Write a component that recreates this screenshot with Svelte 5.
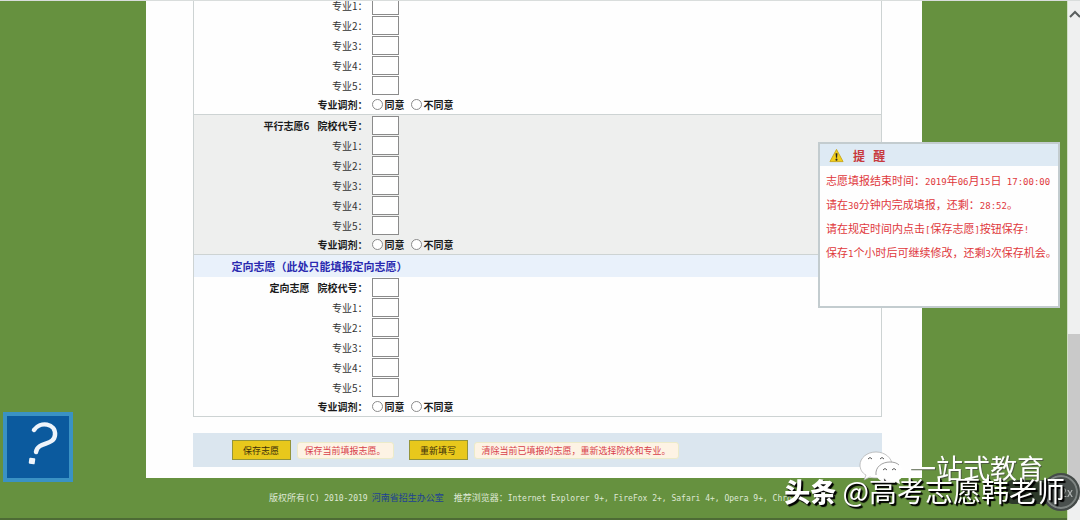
<script lang="ts">
  interface Group {
    id: string;
    title: string;
    shaded: boolean;
    continued: boolean;
  }

  const parallel: Group[] = [
    { id: 'p5', title: '平行志愿5', shaded: false, continued: true },
    { id: 'p6', title: '平行志愿6', shaded: true, continued: false }
  ];
  const directed: Group[] = [
    { id: 'd1', title: '定向志愿', shaded: false, continued: false }
  ];
  const majors = [1, 2, 3, 4, 5];
</script>

{#snippet volunteer(group: Group)}
  <div class="group" class:shaded={group.shaded} class:continued={group.continued}>
    {#if !group.continued}
      <div class="row">
        <label class="label strong" for="{group.id}-school">
          <span class="group-title">{group.title}</span>院校代号：
        </label>
        <input class="code" id="{group.id}-school" type="text" />
      </div>
    {/if}
    {#each majors as n}
      <div class="row">
        <label class="label" for="{group.id}-major-{n}">专业{n}：</label>
        <input class="code" id="{group.id}-major-{n}" type="text" />
      </div>
    {/each}
    <div class="row adjust" role="radiogroup" aria-labelledby="{group.id}-adjust">
      <span class="label strong" id="{group.id}-adjust">专业调剂：</span>
      <label class="choice"><input type="radio" name="{group.id}-adjust" />同意</label>
      <label class="choice"><input type="radio" name="{group.id}-adjust" />不同意</label>
    </div>
  </div>
{/snippet}

<div class="window">
  <div class="page">
    <main class="content">
      <form class="sheet">
        {#each parallel as group}
          {@render volunteer(group)}
        {/each}
        <h2 class="section-title">定向志愿（此处只能填报定向志愿）</h2>
        {#each directed as group}
          {@render volunteer(group)}
        {/each}
      </form>
      <div class="actions">
        <button type="button">保存志愿</button>
        <span class="tip">保存当前填报志愿。</span>
        <button type="button">重新填写</button>
        <span class="tip">清除当前已填报的志愿，重新选择院校和专业。</span>
      </div>
    </main>
    <footer>
      <span>版权所有<span class="latin">(C) 2010-2019</span></span>
      <a href="#home">河南省招生办公室</a>
      <span class="browsers">推荐浏览器：<span class="latin">Internet Explorer 9+, FireFox 2+, Safari 4+, Opera 9+, Chro</span></span>
    </footer>
  </div>
  <div class="scrollbar">
    <svg class="arrow" viewBox="0 0 12 10"><path d="M2 8 L7 3 L12 8" /></svg>
    <div class="thumb"></div>
  </div>
</div>

<aside class="notice">
  <h3>
    <svg viewBox="0 0 16 16">
      <path d="M8 1.5 L15 14.5 H1 Z" fill="#f2cf1d" stroke="#c9a81c" stroke-linejoin="round" />
      <path d="M7 5.5 H9 L8.6 10.5 H7.4 Z" fill="#222" />
      <circle cx="8" cy="12.4" r="1.1" fill="#222" />
    </svg>
    提&nbsp;&nbsp;&nbsp;醒
  </h3>
  <p>志愿填报结束时间：<span class="num">2019</span>年<span class="num">06</span>月<span class="num">15</span>日<span class="num">&nbsp;17:00:00</span></p>
  <p>请在<span class="num">30</span>分钟内完成填报，还剩：<span class="num">28:52</span>。</p>
  <p>请在规定时间内点击<span class="num">[</span>保存志愿<span class="num">]</span>按钮保存<span class="num">!</span></p>
  <p>保存<span class="num">1</span>个小时后可继续修改，还剩<span class="num">3</span>次保存机会。</p>
</aside>

<button class="help" type="button" aria-label="帮助">
  <svg viewBox="0 0 62 62">
    <path d="M27 14 C33 5 49 7 48 19 C47 30 31 25 29 36" fill="none" stroke="#eef4fb" stroke-width="4.5" stroke-linecap="round" />
    <rect x="22" y="42" width="6" height="6" rx="1" fill="#eef4fb" transform="rotate(8 25 45)" />
  </svg>
</button>

<div class="speed">
  <span class="speed-pill"></span>
  <span class="speed-dial">2x</span>
</div>

<div class="channel">
  <svg viewBox="0 0 46 34">
    <path d="M17 1 C8 1 1 7 1 14 C1 18 3 22 7 24 L5 29 L11 26 C13 27 15 27 18 27 C27 27 33 21 33 14 C33 7 26 1 17 1 Z" fill="#fff" stroke="#aaa" stroke-width="0.7" />
    <path d="M9 8 q2 -3 4 0 M21 8 q2 -3 4 0" fill="none" stroke="#555" />
    <path d="M31 11 C23 11 17 16 17 22 C17 28 23 32 31 32 C33 32 35 32 36 31 L41 33 L40 29 C43 27 44 25 44 22 C44 16 39 11 31 11 Z" fill="#fff" />
    <path d="M17 24 C16 16 23 11 31 11 C35 11 38 12 40 14" fill="none" stroke="#777" stroke-width="0.7" />
    <path d="M24 19 q2 -3 4 0 M33 19 q2 -3 4 0" fill="none" stroke="#555" />
  </svg>
  一站式教育
</div>
<div class="author"><b>头条</b> @高考志愿韩老师</div>

<style>
  :global(body) {
    overflow: hidden;
    font-family: 'Noto Sans CJK SC', sans-serif;
    font-size: 10px;
    color: #333;
  }

  .window {
    display: flex;
    height: 100vh;
    box-sizing: border-box;
    border-top: 1px solid #d9dddc;
    overflow: hidden;
  }

  .page {
    flex: 1;
    min-width: 0;
    display: flex;
    flex-direction: column;
    background: #66913f;
    border-bottom: 2px solid #4d6b35;
  }

  .content {
    width: 100%;
    max-width: 776px;
    box-sizing: border-box;
    margin: 0 auto;
    padding: 0 40px 11px 47px;
    background: #fefefe;
  }

  .sheet {
    border: 1px solid #cdd3d3;
    border-top: 0;
    overflow: hidden;
  }

  .group.continued {
    margin-top: -6px;
  }

  .group.shaded {
    border-top: 1px solid #cdd3d3;
    background: #eeefee;
  }

  .row {
    display: flex;
    align-items: center;
    height: 20px;
  }

  .label {
    width: 174px;
    margin-right: 4px;
    text-align: right;
    white-space: nowrap;
  }

  .strong,
  .choice {
    font-weight: 700;
    color: #1a1a1a;
  }

  .group-title {
    margin-right: 8px;
  }

  .code {
    width: 27px;
    height: 19px;
    box-sizing: border-box;
    padding: 0 2px;
    border: 1px solid #8b8b8b;
    background: #fff;
    font-size: 10px;
  }

  .adjust {
    height: 19px;
  }

  .choice {
    display: flex;
    align-items: center;
    gap: 2px;
    margin-right: 6px;
  }

  .choice input {
    appearance: none;
    width: 11px;
    height: 11px;
    margin: 0;
    border: 1px solid #8b8b8b;
    border-radius: 50%;
    background: #fff;
  }

  .section-title {
    margin: 0;
    padding-left: 38px;
    border-top: 1px solid #cdd3d3;
    background: #e9f1fb;
    color: #2a2ab0;
    font-size: 11px;
    font-weight: 700;
    line-height: 22px;
  }

  .actions {
    display: flex;
    align-items: center;
    height: 34px;
    margin-top: 16px;
    padding-left: 39px;
    background: #dbe6ef;
    font-size: 9px;
    white-space: nowrap;
  }

  .actions button {
    width: 59px;
    height: 20px;
    padding: 0;
    border: 1px solid #94953a;
    background: #e8c81c;
    color: #3a2f0a;
    font-family: inherit;
    font-size: 9px;
  }

  .tip {
    margin: 0 15px 0 6px;
    padding: 0 7px;
    border: 1px solid #ecebc9;
    border-radius: 3px;
    background: #fdf3e4;
    color: #d8404a;
    line-height: 15px;
  }

  footer {
    display: flex;
    gap: 4px;
    padding: 13px 0 0 269px;
    color: #dfe8d5;
    font-size: 9px;
    line-height: 14px;
    white-space: nowrap;
    overflow: hidden;
  }

  footer a {
    color: #1d3f96;
    text-decoration: none;
  }

  .browsers {
    margin-left: 6px;
  }

  .latin {
    font-family: 'DejaVu Sans Mono', monospace;
    font-size: 8px;
    line-height: 1;
  }

  .scrollbar {
    display: flex;
    flex-direction: column;
    width: 12px;
    background: #eff0f0;
    border-left: 1px solid #d3e0c6;
  }

  .arrow {
    width: 12px;
    height: 10px;
    margin: 8px 0;
    fill: none;
    stroke: #5a5f5f;
    stroke-width: 2;
  }

  .thumb {
    height: 32%;
    margin: auto 0 20px;
    background: #c9c9c9;
  }

  .notice {
    position: fixed;
    top: 142px;
    right: 20px;
    width: 242px;
    height: 166px;
    box-sizing: border-box;
    border: 2px solid #c3cccf;
    background: #fefefe;
    color: #e0383c;
    font-size: 11px;
    white-space: nowrap;
  }

  .notice h3 {
    display: flex;
    align-items: center;
    gap: 9px;
    height: 22px;
    margin: 0 0 2px;
    padding-left: 9px;
    background: #deeaf4;
    color: #c8383c;
    font-size: 12px;
  }

  .notice h3 svg {
    width: 15px;
    height: 15px;
  }

  .notice p {
    margin: 0;
    padding-left: 6px;
    line-height: 24px;
  }

  .num {
    font-family: 'DejaVu Sans Mono', monospace;
    font-size: 9px;
    line-height: 1;
  }

  .help {
    position: fixed;
    left: 3px;
    bottom: 38px;
    width: 70px;
    height: 70px;
    padding: 0;
    border: 4px solid #3a92c4;
    background: #0b5a9e;
  }

  .help svg {
    display: block;
    width: 62px;
    height: 62px;
  }

  .speed {
    position: fixed;
    right: 0;
    bottom: 9px;
    display: flex;
    align-items: center;
  }

  .speed-pill {
    width: 50px;
    height: 24px;
    margin-right: -14px;
    border-radius: 6px;
    background: #2d3a2a;
  }

  .speed-dial {
    width: 38px;
    height: 38px;
    box-sizing: border-box;
    border: 2px solid #454b49;
    border-radius: 50%;
    background: #4a504e;
    box-shadow: inset 0 0 0 2px #7e8482;
    color: #b5b9b8;
    font-size: 12px;
    line-height: 34px;
    text-align: right;
    padding-right: 5px;
  }

  .channel,
  .author {
    position: fixed;
    color: #fff;
    line-height: 32px;
    white-space: nowrap;
  }

  .channel {
    right: 36px;
    bottom: 35px;
    display: flex;
    align-items: center;
    gap: 4px;
    font-size: 27px;
    text-shadow: 1px 1px 0 #4c5a40;
  }

  .channel svg {
    width: 46px;
    height: 34px;
  }

  .author {
    right: 15px;
    bottom: 13px;
    font-size: 28px;
    text-shadow: 1px 1px 1px #000, 2px 2px 1px #000;
  }

  .author b {
    font-size: 26px;
    font-weight: 900;
  }
</style>
